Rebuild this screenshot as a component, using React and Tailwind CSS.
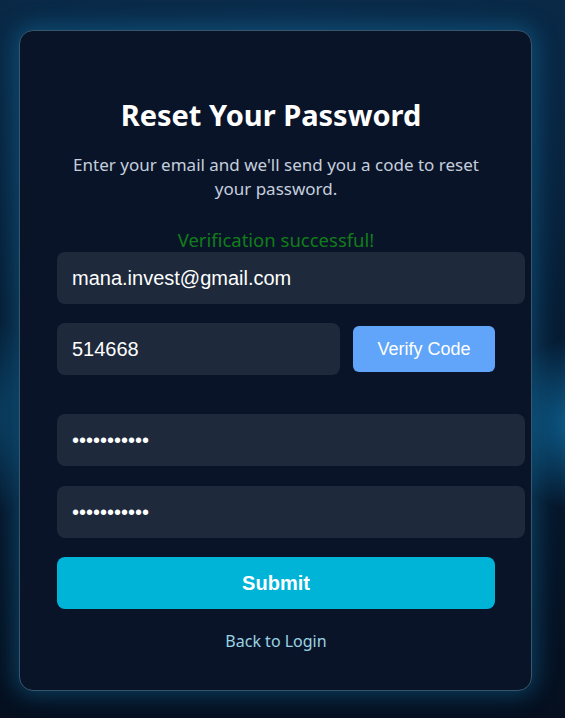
import React, { useState } from 'react';

const sans = { fontFamily: '"Noto Sans", "Open Sans", sans-serif' };

const ResetPassword = () => {
    const [email, setEmail] = useState('mana.invest@gmail.com');
    const [code, setCode] = useState('514668');
    const [password, setPassword] = useState('secretpass1');
    const [confirm, setConfirm] = useState('secretpass1');

    const inputCls =
        'block w-[468px] h-[52px] px-[15px] rounded-lg bg-[#1e293b] text-white text-[20px] font-["Liberation_Sans",Arial,sans-serif] outline-none';

    return (
        <div className="ml-[19px] mt-[30px] w-[513px] rounded-[14px] border border-[#35566b] bg-[#0a1429] pt-[67px] pb-[37px] pl-[37px] pr-[36px] shadow-[0_0_22px_4px_rgba(20,120,170,0.45)]">
            <h2 className="pr-[10px] text-center text-[29px] leading-[34px] font-bold text-white font-['Noto_Sans',sans-serif]">
                Reset Your Password
            </h2>
            <p className="mx-auto mt-[21px] max-w-[430px] text-center text-[17px] leading-[24px] text-[#c4cfdd] font-['Noto_Sans',sans-serif]">
                Enter your email and we'll send you a code to reset your password.
            </p>
            <p className="mt-[27px] text-center text-[18.5px] leading-[24px] text-[#117d19] font-['Noto_Sans',sans-serif]">
                Verification successful!
            </p>

            <form className="flex flex-col">
                <input
                    type="email"
                    value={email}
                    onChange={(e) => setEmail(e.target.value)}
                    className={inputCls}
                />
                <div className="mt-[19px] flex items-center gap-[13px]">
                    <input
                        type="text"
                        value={code}
                        onChange={(e) => setCode(e.target.value)}
                        className='block w-[283px] h-[52px] px-[15px] rounded-lg bg-[#1e293b] text-white text-[20px] font-["Liberation_Sans",Arial,sans-serif] outline-none'
                    />
                    <button
                        type="button"
                        className='w-[142px] h-[46px] rounded-md bg-[#60a5fa] text-white text-[18px] font-["Liberation_Sans",Arial,sans-serif]'
                    >
                        Verify Code
                    </button>
                </div>
                <input
                    type="password"
                    value={password}
                    onChange={(e) => setPassword(e.target.value)}
                    className={`${inputCls} mt-[39px]`}
                />
                <input
                    type="password"
                    value={confirm}
                    onChange={(e) => setConfirm(e.target.value)}
                    className={`${inputCls} mt-[20px]`}
                />
                <button
                    type="submit"
                    onClick={(e) => e.preventDefault()}
                    className='mt-[19px] w-full h-[52px] rounded-lg bg-[#00b4d8] text-white text-[20px] font-bold font-["Liberation_Sans",Arial,sans-serif]'
                >
                    Submit
                </button>
            </form>

            <p className="mt-[20px] text-center text-[16px] leading-[24px] text-[#9ad3e3]" style={sans}>
                Back to Login
            </p>
        </div>
    );
};

export default function App() {
    return (
        <div className="min-h-[718px] w-full overflow-hidden bg-[#071a30] bg-[radial-gradient(ellipse_70%_45%_at_50%_10%,#0b2d4d_0%,transparent_100%),radial-gradient(ellipse_14%_12%_at_102%_59%,#0d5f8f_0%,transparent_100%),radial-gradient(ellipse_10%_14%_at_-2%_58%,#0b4064_0%,transparent_100%),linear-gradient(to_bottom,#082744_0%,#061a30_60%,#050f1f_100%)] pb-[27px]">
            <ResetPassword />
        </div>
    );
}
